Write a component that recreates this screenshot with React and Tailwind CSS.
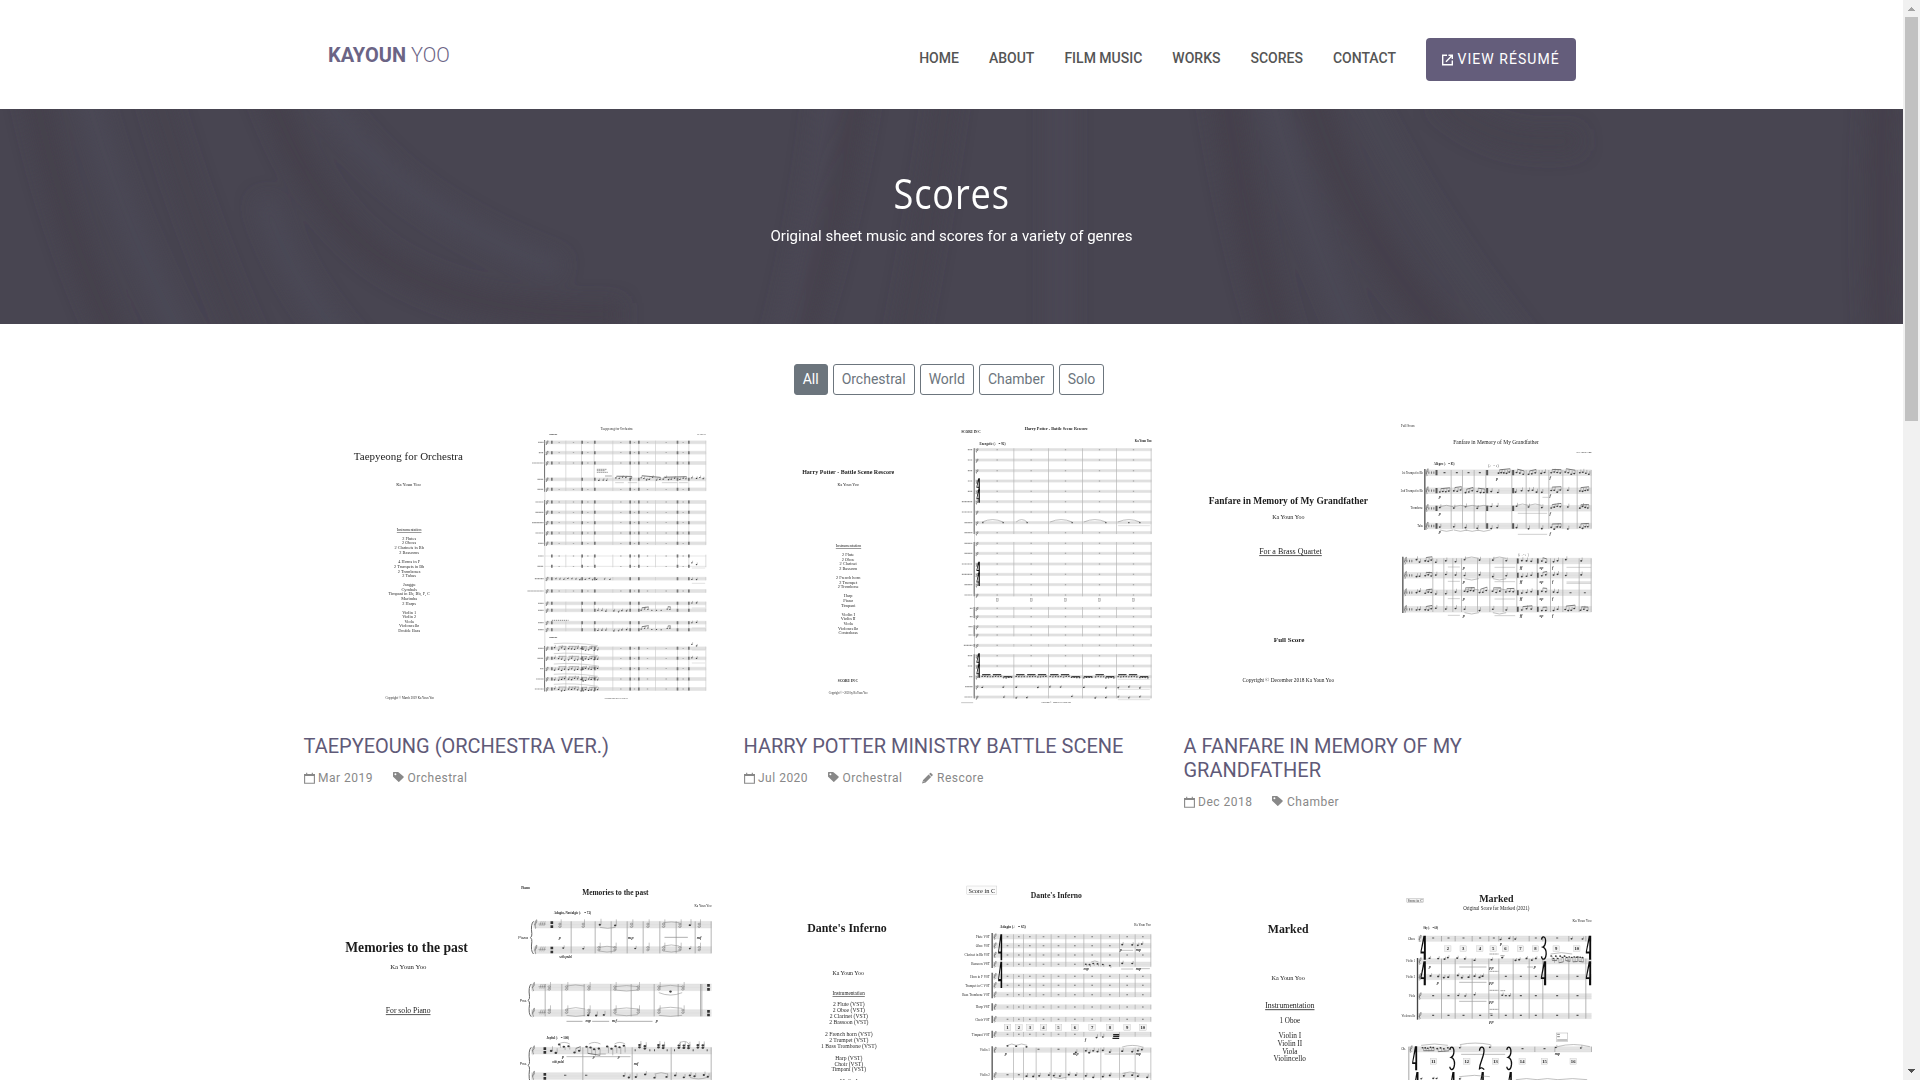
import React from "react";

const hash = (n) => {
  const v = Math.sin(n * 12.9898) * 43758.5453;
  return v - Math.floor(v);
};

/* ---------- engraving primitives ---------- */

const SERIF = "'Liberation Serif', 'DejaVu Sans', serif";

function T({ x1, x2, y, s, b, u, i, f, children }) {
  return (
    <text
      x={x1}
      y={y}
      fontSize={s}
      fontWeight={b ? 700 : 400}
      fontStyle={i ? "italic" : "normal"}
      textDecoration={u ? "underline" : undefined}
      textLength={x2 - x1}
      lengthAdjust="spacingAndGlyphs"
      fontFamily={f || SERIF}
      fill="#1c1c1c"
    >
      {children}
    </text>
  );
}

function Lines({ cx, s, items }) {
  return items.map(([y, label]) => (
    <text key={y} x={cx} y={y} fontSize={s} textAnchor="middle" fontFamily={SERIF} fill="#2c2c2c">
      {label}
    </text>
  ));
}

function Staff({ x1, x2, ys, h = 10, clef = true }) {
  return ys.map((y) => (
    <g key={y}>
      <rect x={x1} y={y - h / 2} width={x2 - x1} height={h} fill="#e4e4e4" />
      <path d={`M${x1} ${y - h / 2}H${x2}M${x1} ${y}H${x2}M${x1} ${y + h / 2}H${x2}`} stroke="#d6d6d6" strokeWidth="1" />
      {clef && (
        <path
          d={`M${x1 + 5} ${y + h / 2 + 2}c5-3-4-6 1-${h}s4-3 3 2-8 4-4 8`}
          fill="none"
          stroke="#666"
          strokeWidth="2"
        />
      )}
    </g>
  ));
}

function Bars({ xs, y1, y2, c = "#9a9a9a", w = 2 }) {
  return <path d={xs.map((x) => `M${x} ${y1}V${y2}`).join("")} stroke={c} strokeWidth={w} fill="none" />;
}

function Marks({ xs, ys, w = 5, h = 10, c = "#555" }) {
  return (
    <path
      d={ys.map((y) => xs.map((x) => `M${x - w / 2} ${y - h / 2}h${w}v${h}h${-w}z`).join("")).join("")}
      fill={c}
    />
  );
}

function Labels({ x2, ys, w = 20 }) {
  return ys.map((y, k) => {
    const len = Array.isArray(w) ? w[k] : w;
    return <path key={y} d={`M${x2 - len} ${y}H${x2}`} stroke="#999" strokeWidth="3.5" strokeDasharray="4 1 3 1" />;
  });
}

function Notes({ xs, y, spread = 6, stem = 14, beam, seed = 1, r = 3 }) {
  const pts = xs.map((x, k) => [x, y + (hash(seed + k) - 0.5) * 2 * spread]);
  return (
    <g stroke="#666" fill="#3a3a3a">
      {pts.map(([x, py], k) => (
        <g key={k}>
          <ellipse cx={x} cy={py} rx={r} ry={r * 0.8} stroke="none" />
          {stem !== 0 && <path d={`M${x + r} ${py}V${py - stem}`} strokeWidth="1.2" />}
        </g>
      ))}
      {beam && pts.length > 1 && (
        <path d={`M${pts[0][0] + r} ${pts[0][1] - stem}L${pts[pts.length - 1][0] + r} ${pts[pts.length - 1][1] - stem}`} strokeWidth="2.6" />
      )}
    </g>
  );
}

function Slur({ x1, x2, y, d = -10 }) {
  return <path d={`M${x1} ${y}Q${(x1 + x2) / 2} ${y + d * 1.6} ${x2} ${y}`} stroke="#888" strokeWidth="1.6" fill="none" />;
}

function Dyn({ items }) {
  return items.map(([x, y, t]) => (
    <text key={`${x}-${y}`} x={x} y={y} fontSize="13" fontStyle="italic" fontWeight="700" textAnchor="middle" fontFamily={SERIF} fill="#333">
      {t}
    </text>
  ));
}

function Boxed({ items, y, size = 17 }) {
  return items.map(([x, n]) => (
    <g key={x}>
      <rect x={x - size / 2 - 1} y={y - size / 2} width={size + 2} height={size} fill="#f1f1f1" stroke="#bbb" />
      <text x={x} y={y + 5} fontSize="14" fontWeight="700" textAnchor="middle" fontFamily={SERIF} fill="#222">
        {n}
      </text>
    </g>
  ));
}

function BigFour({ x, y, h, w = 16 }) {
  return (
    <path
      fill="#111"
      d={`M${x + w * 0.55} ${y}L${x + w} ${y}V${y + h}H${x + w * 0.6}V${y + h * 0.74}H${x}V${y + h * 0.66}ZM${x + w * 0.65} ${y + h * 0.2}L${x + w * 0.2} ${y + h * 0.66}H${x + w * 0.65}Z`}
      fillRule="evenodd"
    />
  );
}

function BigThree({ x, y, h = 70 }) {
  return (
    <path
      d={`M${x} ${y + h * 0.14}C${x + 2} ${y - 4} ${x + 14} ${y} ${x + 12} ${y + h * 0.26}Q${x + 11} ${y + h * 0.42} ${x + 4} ${y + h * 0.46}Q${x + 15} ${y + h * 0.52} ${x + 14} ${y + h * 0.76}C${x + 12} ${y + h * 1.05} ${x + 1} ${y + h * 1.02} ${x} ${y + h * 0.86}`}
      fill="none"
      stroke="#111"
      strokeWidth="4"
    />
  );
}

/* ---------- thumbnails ---------- */

function Sheet({ height, className, title, children }) {
  return (
    <svg role="img" aria-label={title} viewBox={`40.5 30 1248 ${height}`} className={className}>
      <defs>
        <filter id="soft" x="-5%" y="-5%" width="110%" height="110%">
          <feGaussianBlur stdDeviation="1.3" />
        </filter>
      </defs>
      <g filter="url(#soft)">{children}</g>
    </svg>
  );
}

function Taepyeong() {
  const a = [97, 128, 159, 208, 238];
  const b = [276, 307, 338, 369, 400];
  const k = [580, 601];
  const l = [638, 659];
  const s = [715, 745, 776, 807, 837];
  const full = [...a, ...b, 506, 543, ...k, ...l, ...s];
  const bars = [826, 873, 911, 967, 1019, 1045, 1095, 1161, 1195, 1246];
  const sig = [784, 875, 913, 1019, 1045, 1161, 1195];
  return (
    <>
      <T x1={190} x2={517} y={149} s={32}>Taepyeong for Orchestra</T>
      <T x1={317} x2={391} y={229} s={14}>Ka Youn Yoo</T>
      <T x1={319} x2={393} y={363} s={13} u>Instrumentation</T>
      <Lines cx={356} s={13} items={[[389, "2 Flutes"], [402, "2 Oboes"], [416, "2 Clarinets in Bb"], [432, "2 Bassoons"], [458, "4 Horns in F"], [473, "2 Trumpets in Bb"], [488, "2 Trombones"], [502, "2 Tubas"], [528, "Janggu"], [542, "Cymbals"], [556, "Timpani in Eb, Bb, F, C"], [571, "Marimba"], [585, "2 Harps"], [611, "Violin 1"], [625, "Violin 2"], [638, "Viola"], [651, "Violoncello"], [665, "Double Bass"]]} />
      <T x1={285} x2={431} y={867} s={11}>Copyright © March 2019 Ka Youn Yoo</T>
      <T x1={931} x2={1026} y={61} s={12}>Taepyeong for Orchestra</T>
      <T x1={1220} x2={1246} y={75} s={6}>Ka Youn Yoo</T>
      <T x1={776} x2={800} y={74} s={8} b>Moderato</T>
      <T x1={776} x2={800} y={685} s={8} b>Moderato</T>
      <path d="M763 90V846" stroke="#bbb" strokeWidth="1.5" />
      <Bars xs={[762]} y1={90} y2={245} w={3} c="#777" />
      <Bars xs={[762]} y1={270} y2={407} w={3} c="#777" />
      <Bars xs={[762]} y1={708} y2={844} w={3} c="#777" />
      <Staff x1={763} x2={1247} ys={full} h={9} />
      <path d="M763 438H1247M763 469H1247" stroke="#ccc" strokeWidth="1.5" />
      {[[92, 243], [271, 405], [434, 472], [501, 511], [538, 548], [575, 606], [633, 664], [710, 842]].map(([p, q]) => (
        <Bars key={p} xs={bars} y1={p} y2={q} c="#c8c8c8" w={1.8} />
      ))}
      <Marks xs={sig} ys={[...full, 438, 469]} w={5} h={9} c="#777" />
      <Marks xs={[806, 849, 892, 991, 1032, 1071, 1127, 1178]} ys={[97, 128, 159, 238, ...b, 438, 469, 543]} w={4} h={2.5} c="#999" />
      <Marks xs={[991, 1032, 1071, 1127, 1178]} ys={s} w={4} h={2.5} c="#999" />
      <Labels x2={759} ys={[...full, 438, 469]} w={[16, 14, 34, 18, 18, 24, 24, 34, 24, 16, 26, 48, 16, 16, 16, 16, 16, 18, 10, 22, 26, 16, 18]} />
      <path d="M919 178H948M919 182H944M919 187H952M944 198H964" stroke="#888" strokeWidth="2.5" strokeDasharray="5 1" />
      <Notes xs={[925, 938, 948]} y={211} r={2.2} stem={6} spread={3} seed={3} />
      <Notes xs={[976, 986, 996, 1006, 1022]} y={204} r={2.2} stem={5} beam seed={5} spread={4} />
      <Notes xs={[1052, 1060, 1068, 1076, 1086, 1098, 1108]} y={205} r={2.2} stem={6} beam seed={8} spread={5} />
      <Notes xs={[1118, 1126, 1134, 1142, 1152, 1168, 1178, 1186]} y={205} r={2.2} stem={6} beam seed={11} spread={4} />
      <Notes xs={[1204, 1218, 1228, 1238]} y={204} r={2.2} stem={6} seed={17} spread={4} />
      <path d="M974 218H1000M1012 218H1040M1114 218H1160M1165 218H1192" stroke="#999" strokeWidth="1.3" />
      <Notes xs={[796, 808, 820, 832, 844, 856, 868, 884, 896, 906, 918, 942, 958]} y={507} r={2} stem={4} spread={2} seed={4} />
      {[601, 659].map((y) => (
        <g key={y}>
          <Notes xs={[922, 934, 946]} y={y} r={2.2} stem={7} spread={3} seed={y} />
          <Notes xs={[970, 984, 994, 1008]} y={y + 2} r={2.2} stem={6} spread={3} seed={y + 1} />
          <Notes xs={[1052, 1062, 1072]} y={y - 3} r={2.2} stem={7} beam spread={3} seed={y + 2} />
          <Notes xs={[1084, 1098, 1112]} y={y} r={2} stem={0} spread={1} seed={y + 3} />
          <Notes xs={[1130, 1138]} y={y - 3} r={2.2} stem={7} beam spread={2} seed={y + 3} />
        </g>
      ))}
      {[460, 506, 580, 640, 706, 745].map((y) => (
        <g key={y}>
          <Notes xs={[1204, 1218]} y={y} r={2.2} stem={6} spread={4} seed={y} />
          <path d={`M1204 ${y + 14}H1244`} stroke="#bbb" strokeWidth="1.3" />
        </g>
      ))}
      <path d="M784 631H834" stroke="#888" strokeWidth="3" strokeDasharray="4 2" />
      {s.map((y, n) => (
        <g key={y}>
          <Notes xs={[792, 804, 813, 822, 834, 843, 852, 861, 872, 878, 885, 894, 902, 911, 921]} y={y + 2} r={2.3} stem={8} spread={4} seed={n * 7} />
          <path d={`M804 ${y - 6}H828M834 ${y - 6}H866M872 ${y - 5}H890M896 ${y - 5}H920`} stroke="#777" strokeWidth="1.6" />
          <path d={`M790 ${y - 14}Q850 ${y - 19} 922 ${y - 8}`} stroke="#aaa" strokeWidth="1.5" fill="none" />
        </g>
      ))}
      <T x1={943} x2={1012} y={867} s={6}>Copyright March 2019 Ka Youn Yoo</T>
    </>
  );
}

function HarryPotter() {
  const g1 = [119, 150, 182, 213, 244, 275, 306, 338, 368];
  const g2 = [400, 430, 462, 493, 524, 555];
  const g5 = [737, 768, 800, 830, 861];
  const all = [...g1, ...g2, 595, 620, 650, 675, 706, ...g5];
  const bars = [850, 954, 1056, 1158, 1262];
  const mids = [800, 902, 1005, 1107, 1209];
  return (
    <>
      <T x1={215} x2={491} y={191} s={19} b>Harry Potter - Battle Scene Rescore</T>
      <T x1={321} x2={385} y={228} s={13}>Ka Youn Yoo</T>
      <T x1={316} x2={392} y={411} s={13} u>Instrumentation</T>
      <Lines cx={353} s={13} items={[[438, "2 Flute"], [452, "2 Oboe"], [466, "2 Clarinet"], [480, "2 Bassoon"], [507, "2 French horn"], [521, "2 Trumpet"], [535, "2 Trombone"], [562, "Harp"], [576, "Piano"], [590, "Timpani"], [617, "Violin I"], [631, "Violin II"], [645, "Viola"], [659, "Violoncello"], [672, "Contrabass"]]} />
      <T x1={322} x2={383} y={817} s={11} b>SCORE IN C</T>
      <T x1={295} x2={411} y={851} s={9.5}>Copyright © - 2020 by Ka Youn Yoo</T>
      <T x1={883} x2={1072} y={59} s={13} b>Harry Potter - Battle Scene Rescore</T>
      <T x1={692} x2={751} y={70} s={11} b>SCORE IN C</T>
      <T x1={1213} x2={1263} y={96} s={9} b>Ka Youn Yoo</T>
      <T x1={747} x2={825} y={106} s={12} b>Energetic (♩ = 92)</T>
      <path d="M732 114V866" stroke="#aaa" strokeWidth="1.5" />
      <Staff x1={733} x2={1263} ys={all} h={7} />
      {[[115, 372], [396, 559], [591, 624], [646, 679], [702, 710], [733, 865]].map(([p, q]) => (
        <g key={p}>
          <Bars xs={bars} y1={p} y2={q} c="#b4b4b4" />
          <Bars xs={[731]} y1={p} y2={q} c="#777" w={3.5} />
        </g>
      ))}
      <Labels x2={726} ys={all} w={[14, 14, 14, 14, 14, 32, 32, 24, 24, 24, 24, 32, 32, 24, 24, 8, 8, 12, 12, 26, 14, 14, 10, 22, 24]} />
      <Marks xs={mids} ys={[119, 150, 182, 213, 244, 275, 306, 368, ...g2, 595, 620, 650, 675, 706, 737, 768]} w={4} h={3} c="#999" />
      {[205, 455, 730].map((y) => (
        <g key={y}>
          <BigFour x={738} y={y} h={38} w={10} />
          <BigFour x={738} y={y + 33} h={40} w={10} />
        </g>
      ))}
      {[[755, 818], [857, 890], [959, 1025], [1060, 1126], [1162, 1228]].map(([p, q]) => (
        <Slur key={p} x1={p} x2={q} y={336} d={-9} />
      ))}
      <Marks xs={[757, 818, 890, 1025, 1126, 1195, 1228]} ys={[338]} w={4} h={4} />
      {mids.map((x) => (
        <rect key={x} x={x - 3} y={565} width="6" height="10" fill="#ddd" stroke="#888" />
      ))}
      {[[755, 0], [787, 0], [819, 6], [857, 0], [890, 0], [922, 0], [959, 0], [991, 0], [1023, 6], [1060, 6], [1095, 0], [1126, 6], [1163, 0], [1195, 0], [1228, 6]].map(([x, dy]) => (
        <g key={x}>
          <path d={`M${x} ${794 + dy}h25`} stroke="#333" strokeWidth="3.6" />
          <Notes xs={[x, x + 8, x + 16, x + 24]} y={800 + dy / 2} r={2.3} stem={4} spread={1} seed={x} />
        </g>
      ))}
      <Notes xs={[755, 818, 857, 922, 958, 990, 1060, 1126, 1163, 1195, 1228]} y={832} r={2.5} stem={5} spread={2} seed={3} />
      <Notes xs={[820, 857, 889, 1024, 1094, 1126, 1163, 1195, 1228]} y={861} r={2.5} stem={5} spread={3} seed={9} />
      <path d="M1162 808H1258M1162 838H1258M1162 869H1258M1162 347H1258" stroke="#bbb" strokeWidth="1.3" />
      <T x1={933} x2={1021} y={879} s={8}>Copyright © - 2020 by Ka Youn Yoo</T>
      <path d="M692 878H728" stroke="#aaa" strokeWidth="2" />
    </>
  );
}

function Fanfare() {
  const a = [188, 242, 295, 348];
  const b = [453, 496, 548, 598];
  const seg = (list, y, seed) =>
    list.map(([p, n, step, beam], k) => (
      <Notes key={p} xs={Array.from({ length: n }, (_, q) => p + q * step)} y={y} r={3} stem={10} spread={4} beam={beam} seed={seed + k * 5} />
    ));
  return (
    <>
      <T x1={115} x2={592} y={282} s={28} b>Fanfare in Memory of My Grandfather</T>
      <T x1={305} x2={402} y={326} s={18}>Ka Youn Yoo</T>
      <T x1={266} x2={454} y={433} s={22} u>For a Brass Quartet</T>
      <T x1={310} x2={402} y={696} s={21} b>Full Score</T>
      <T x1={216} x2={491} y={817} s={16}>Copyright © December 2018 Ka Youn Yoo</T>
      <T x1={691} x2={734} y={52} s={11}>Full Score</T>
      <T x1={848} x2={1105} y={101} s={16}>Fanfare in Memory of My Grandfather</T>
      <T x1={1218} x2={1263} y={130} s={8}>Ka Youn Yoo</T>
      <T x1={790} x2={852} y={165} s={11} b>Allegro (♩ = 85)</T>
      <T x1={953} x2={984} y={171} s={11}>(♩ = ♪)</T>
      <T x1={694} x2={757} y={192} s={9}>1st Trumpet in Bb</T>
      <T x1={691} x2={757} y={245} s={9}>2nd Trumpet in Bb</T>
      <T x1={720} x2={757} y={298} s={9}>Trombone</T>
      <T x1={740} x2={757} y={351} s={9}>Tuba</T>
      <Staff x1={763} x2={1263} ys={a} h={17} />
      <Staff x1={698} x2={1263} ys={b} h={17} />
      <Bars xs={[842, 876, 911, 946, 1024, 1067, 1106, 1135, 1177, 1220, 1262]} y1={180} y2={356} c="#aaa" w={2.2} />
      <Bars xs={[787, 820, 847, 873, 921, 958, 998, 1039, 1100, 1140, 1177, 1226, 1262]} y1={445} y2={606} c="#aaa" w={2.2} />
      <Bars xs={[763]} y1={177} y2={360} w={4} c="#555" />
      <Bars xs={[697]} y1={440} y2={609} w={4} c="#555" />
      <Marks xs={[798, 950, 1028]} ys={a} w={6} h={16} c="#555" />
      <Marks xs={[1042, 1102]} ys={b} w={5} h={15} c="#555" />
      <Marks xs={[775, 783, 790]} ys={a} w={3} h={7} c="#777" />
      <Marks xs={[709, 717, 724]} ys={b} w={3} h={7} c="#777" />
      <Marks xs={[822, 859, 894, 928]} ys={[188]} w={6} h={4} />
      {seg([[984, 5, 8, true], [1038, 3, 10, true], [1074, 3, 10, true], [1112, 2, 10, false], [1142, 4, 9, true], [1184, 4, 9, true], [1228, 4, 9, false]], 189, 3)}
      {seg([[808, 4, 9, true], [850, 3, 10, true], [885, 3, 10, true], [920, 3, 10, true], [962, 2, 20, false], [1035, 2, 18, false], [1074, 3, 12, false], [1114, 1, 9, false], [1142, 4, 9, true], [1192, 1, 9, false], [1228, 4, 8, true]], 244, 20)}
      {seg([[808, 1, 1], [850, 1, 1], [885, 1, 1], [920, 1, 1], [962, 2, 18, false], [1038, 1, 1], [1074, 1, 1], [1114, 1, 1], [1142, 4, 9, true], [1192, 1, 1], [1228, 4, 8, true]], 292, 40)}
      {seg([[808, 1, 1], [850, 1, 1], [885, 1, 1], [920, 1, 1], [962, 2, 18, false], [1038, 1, 1], [1074, 1, 1], [1114, 1, 1], [1142, 4, 9, true], [1192, 1, 1], [1228, 4, 8, true]], 354, 60)}
      {[808, 850, 885, 920].map((x) => (
        <g key={x}>
          <Slur x1={x} x2={x + 40} y={290} d={-5} />
          <Slur x1={x} x2={x + 40} y={360} d={5} />
        </g>
      ))}
      <Slur x1={1038} x2={1074} y={286} d={-5} />
      <Slur x1={1074} x2={1114} y={286} d={-5} />
      {b.map((y, n) => (
        <g key={y}>
          {seg([[738, 2, 9, false], [764, 3, 9, true], [796, 1, 1], [826, 1, 1], [855, 1, 1]], y, n * 13)}
          {n === 2
            ? seg([[882, 4, 9, true], [927, 3, 10, true], [966, 3, 11, true], [1006, 3, 11, true]], y - 4, 5)
            : seg([[882, 1, 1], [927, 1, 1], [967, 1, 1], [1007, 1, 1]], y, n + 2)}
          {seg([[1054, 3, 14, n === 3], [1114, 2, 12, true], [1149, 2, 12, false]], y, n * 9 + 4)}
          {n === 2 ? <Marks xs={[1200, 1243]} ys={[y]} w={6} h={3} /> : seg(n === 3 ? [[1184, 4, 9, true], [1230, 3, 10, true]] : [[1186, 1, 1], [1232, 1, 1]], y, n * 3)}
          <Slur x1={882} x2={925} y={y - (n === 1 || n === 3 ? -10 : 8)} d={n === 1 || n === 3 ? 5 : -5} />
          <Slur x1={967} x2={1007} y={y - (n === 1 || n === 3 ? -10 : 8)} d={n === 1 || n === 3 ? 5 : -5} />
          <path d={`M832 ${y + 18}H868M972 ${y + 19}H1034`} stroke="#999" strokeWidth="1.4" />
          <Dyn items={[[880, y + 23, "p"], [1052, y + 23, "ff"], [1113, y + 23, "sp"], [1147, y + 23, "f"]]} />
        </g>
      ))}
      <path d="M1188 472H1262M1188 516H1262M1188 520H1262M1042 310H1130M1042 373H1130M1116 262H1134" stroke="#999" strokeWidth="1.4" />
      <Dyn items={[[980, 210, "p"], [1139, 208, "f"], [808, 264, "p"], [1139, 262, "f"], [808, 314, "p"], [1139, 314, "f"], [808, 370, "p"], [1139, 374, "f"]]} />
      <T x1={1044} x2={1074} y={439} s={11}>(♩. = ♩)</T>
    </>
  );
}

function Brace({ x, y1, y2 }) {
  const m = (y1 + y2) / 2;
  return <path d={`M${x + 9} ${y1}Q${x} ${y1 + 8} ${x + 4} ${m - 12}Q${x + 5} ${m - 4} ${x} ${m}Q${x + 5} ${m + 4} ${x + 4} ${m + 12}Q${x} ${y2 - 8} ${x + 9} ${y2}`} fill="none" stroke="#666" strokeWidth="3" />;
}

function Chord({ x, y, up = true }) {
  return (
    <g>
      <ellipse cx={x} cy={y} rx="3.6" ry="2.4" fill="none" stroke="#666" strokeWidth="1.5" />
      <ellipse cx={x} cy={y + 8} rx="3.6" ry="2.4" fill="none" stroke="#666" strokeWidth="1.5" />
      <path d={up ? `M${x + 4} ${y + 8}V${y - 14}` : `M${x - 4} ${y}V${y + 22}`} stroke="#777" strokeWidth="1.3" />
    </g>
  );
}

function Memories() {
  return (
    <>
      <T x1={164} x2={532} y={245} s={41} b>Memories to the past</T>
      <T x1={299} x2={408} y={298} s={21}>Ka Youn Yoo</T>
      <T x1={286} x2={420} y={430} s={22} u>For solo Piano</T>
      <T x1={692} x2={718} y={57} s={9} b>Piano</T>
      <T x1={875} x2={1074} y={76} s={22} b>Memories to the past</T>
      <T x1={1212} x2={1263} y={112} s={10}>Ka Youn Yoo</T>
      <T x1={790} x2={902} y={131} s={11} b>Adagio, Nostalgic (♩ = 72)</T>
      <T x1={683} x2={713} y={207} s={12} f="'Liberation Sans', sans-serif">Piano</T>
      <T x1={688} x2={710} y={395} s={12} f="'Liberation Sans', sans-serif">Pno.</T>
      <T x1={688} x2={710} y={584} s={12} f="'Liberation Sans', sans-serif">Pno.</T>
      <Staff x1={729} x2={1263} ys={[164, 240]} h={20} />
      <Staff x1={722} x2={1263} ys={[352, 429, 542, 618]} h={20} />
      <Brace x={720} y1={154} y2={252} />
      <Brace x={713} y1={342} y2={440} />
      <Brace x={713} y1={532} y2={640} />
      <Bars xs={[842, 914, 962, 1010, 1058, 1108, 1157, 1214, 1262]} y1={154} y2={250} c="#999" w={2.2} />
      <Bars xs={[764, 814, 881, 961, 1022, 1091, 1163, 1230, 1234]} y1={342} y2={439} c="#999" w={2.2} />
      <Bars xs={[877, 1025, 1142, 1262]} y1={532} y2={640} c="#999" w={2.2} />
      <Marks xs={[784]} ys={[158, 170, 234, 246]} w={8} h={8} c="#333" />
      <Marks xs={[1254]} ys={[346, 358, 424, 435]} w={8} h={8} c="#333" />
      <Marks xs={[763]} ys={[536, 547, 613, 625]} w={8} h={8} c="#333" />
      {[164, 240, 352, 429].map((y) => (
        <path key={y} d={`M748 ${y + 4}l4-14M754 ${y + 4}l4-14M760 ${y + 4}l4-14M744 ${y - 2}h22`} stroke="#777" strokeWidth="1.5" />
      ))}
      {[808, 878, 1023, 1072, 1119, 1168, 1226].map((x) => (
        <Chord key={x} x={x} y={162} />
      ))}
      {[925, 973, 1072, 1119, 1168, 1226].map((x) => (
        <Chord key={x} x={x} y={232} />
      ))}
      <Notes xs={[928, 974, 1198]} y={166} spread={2} r={3.5} stem={18} seed={2} />
      <Notes xs={[818, 878, 1034, 1198]} y={236} spread={2} r={3} stem={8} seed={2} />
      <Slur x1={928} x2={975} y={172} d={4} />
      <Slur x1={1119} x2={1166} y={158} d={-3} />
      <Slur x1={925} x2={974} y={232} d={-4} />
      <Slur x1={925} x2={974} y={243} d={4} />
      <Slur x1={1119} x2={1166} y={228} d={-4} />
      <Slur x1={1119} x2={1166} y={243} d={4} />
      <path d="M1122 202H1192" stroke="#888" strokeWidth="2" />
      <Dyn items={[[808, 207, "p"], [1021, 207, "mp"], [1226, 206, "mf"], [893, 456, "mp"], [972, 456, "mf"], [1099, 456, "p"], [818, 564, "p"], [910, 564, "p"], [985, 564, "p"], [1037, 586, "mf"]]} />
      <T x1={807} x2={844} y={263} s={9} i b>with pedal</T>
      <T x1={785} x2={820} y={579} s={9} i b>with pedal</T>
      {[776, 828, 895, 973, 1043, 1105, 1177].map((x) => (
        <g key={x}>
          <Chord x={x} y={350} />
          <Chord x={x} y={420} />
        </g>
      ))}
      <Slur x1={828} x2={882} y={348} d={-4} />
      <Slur x1={973} x2={1043} y={350} d={-4} />
      <Slur x1={973} x2={1043} y={360} d={4} />
      <Slur x1={1105} x2={1175} y={350} d={-5} />
      <Slur x1={1105} x2={1175} y={368} d={9} />
      <Slur x1={828} x2={884} y={417} d={-5} />
      <Slur x1={828} x2={884} y={436} d={4} />
      <Slur x1={973} x2={1043} y={417} d={-4} />
      <Slur x1={973} x2={1043} y={434} d={4} />
      <Slur x1={1105} x2={1175} y={415} d={-4} />
      <Slur x1={1105} x2={1175} y={436} d={4} />
      <Notes xs={[893, 917, 940]} y={436} r={3.5} stem={12} spread={2} seed={5} />
      <Notes xs={[1140]} y={364} r={4} stem={0} spread={1} />
      <path d="M828 454H876M905 454H956M980 454H1086" stroke="#999" strokeWidth="2.4" />
      <T x1={768} x2={836} y={507} s={12} b>Joyful (♩ = 100)</T>
      <Notes xs={[782, 796]} y={548} r={4} stem={14} seed={2} />
      <Notes xs={[806, 820, 834]} y={526} r={3.8} stem={-10} seed={12} spread={4} />
      <Notes xs={[852, 866]} y={546} r={3.8} stem={12} beam seed={6} />
      <Notes xs={[888, 900, 911, 925]} y={532} r={3.8} stem={-20} beam seed={8} spread={6} />
      <Notes xs={[950, 963, 975, 987, 1000]} y={530} r={3.8} stem={-20} seed={15} spread={7} />
      <Slur x1={804} x2={838} y={522} d={-6} />
      <Slur x1={895} x2={930} y={522} d={-6} />
      <Slur x1={972} x2={1004} y={522} d={-6} />
      <path d="M828 560H1020M924 552H946" stroke="#999" strokeWidth="2" />
      {[1047, 1063, 1104, 1118, 1165, 1180, 1194, 1222, 1237].map((x, n) => (
        <g key={x}>
          <Notes xs={[x]} y={527} r={4.2} stem={12} spread={2} seed={n} />
          <Notes xs={[x]} y={534} r={4.2} stem={12} spread={2} seed={n} />
        </g>
      ))}
      <Slur x1={1165} x2={1196} y={522} d={-10} />
      <Marks xs={[1034, 1078, 1092, 1130, 1152, 1208, 1250]} ys={[541]} w={3} h={6} />
      <Marks xs={[824, 887]} ys={[616]} w={7} h={3} />
      <Notes xs={[1000, 1015, 1036, 1064, 1092, 1128, 1154, 1180, 1198, 1212, 1240, 1252]} y={617} r={3.5} stem={10} seed={9} />
      <Slur x1={1092} x2={1132} y={612} d={-5} />
      <Slur x1={1198} x2={1250} y={622} d={6} />
    </>
  );
}

function Dante() {
  const a = [200, 227, 255, 283];
  const b = [319, 346, 374];
  const all = [...a, ...b, 411, 448, 493, 540, 616];
  const bars = [849, 879, 917, 962, 1006, 1060, 1111, 1167, 1214, 1261];
  const mids = [831, 865, 898, 939, 984, 1033, 1085, 1138, 1190, 1237];
  return (
    <>
      <T x1={230} x2={469} y={185} s={36} b>Dante's Inferno</T>
      <T x1={306} x2={400} y={314} s={18}>Ka Youn Yoo</T>
      <T x1={306} x2={403} y={375} s={16} u>Instrumentation</T>
      <Lines cx={355} s={17} items={[[409, "2 Flute (VST)"], [427, "2 Oboe (VST)"], [445, "2 Clarinet (VST)"], [463, "2 Bassoon (VST)"], [498, "2 French horn (VST)"], [516, "2 Trumpet (VST)"], [534, "1 Bass Trombone (VST)"], [569, "Harp (VST)"], [587, "Choir (VST)"], [604, "Timpani (VST)"], [639, "Violin I"]]} />
      <rect x="709" y="48" width="90" height="26" fill="#fbfbfb" stroke="#bbb" />
      <T x1={714} x2={794} y={68} s={20}>Score in C</T>
      <T x1={901} x2={1054} y={83} s={23} b>Dante's Inferno</T>
      <T x1={1211} x2={1261} y={168} s={9}>Ka Youn Yoo</T>
      <T x1={808} x2={886} y={173} s={13} b>Adagio (♩ = 65)</T>
      {[["Flute VST", 736, 203], ["Oboe VST", 736, 230], ["Clarinet in Bb VST", 702, 258], ["Bassoon VST", 722, 286], ["Horn in F VST", 719, 323], ["Trumpet in C VST", 704, 350], ["Bass Trombone VST", 695, 378], ["Harp VST", 736, 415], ["Choir VST", 734, 452], ["Timpani VST", 724, 497], ["Violin 1", 748, 543], ["Violin 2", 748, 619]].map(([t, x, y]) => (
        <T key={y} x1={x} x2={778} y={y} s={10}>{t}</T>
      ))}
      <Staff x1={787} x2={1262} ys={all} h={14} />
      {[[193, 290], [312, 381], [404, 418], [441, 455], [486, 500], [533, 640]].map(([p, q]) => (
        <g key={p}>
          <Bars xs={bars} y1={p} y2={q} c="#aaa" />
          <Bars xs={[785]} y1={p - 4} y2={q + 4} c="#555" w={4} />
        </g>
      ))}
      <Marks xs={mids} ys={[200, 255, 319, 346, 374, 411, 448]} w={5} h={3} c="#777" />
      <Marks xs={mids.slice(0, 8)} ys={[227]} w={5} h={3} c="#777" />
      <Marks xs={mids.slice(0, 6)} ys={[283, 493]} w={5} h={3} c="#777" />
      <BigFour x={803} y={193} h={78} w={12} />
      <BigFour x={803} y={275} h={79} w={12} />
      <Boxed y={473} size={18} items={mids.map((x, n) => [x, n + 1])} />
      <Notes xs={[1066, 1077, 1088, 1101, 1117, 1138]} y={283} r={3} stem={-7} seed={5} spread={4} />
      <Slur x1={1082} x2={1104} y={276} d={-4} />
      <Notes xs={[1175, 1205, 1222, 1234]} y={225} r={3} stem={8} seed={4} spread={4} />
      <Notes xs={[1175, 1205]} y={281} r={3} stem={8} seed={4} spread={3} />
      <path d="M1172 241H1208M1172 297H1208M1228 296H1258M1122 552H1214" stroke="#999" strokeWidth="1.8" />
      <Dyn items={[[1067, 299, "mp"], [1224, 244, "mp"], [1224, 299, "mp"], [1171, 244, "p"], [826, 556, "p"], [1036, 556, "mp"], [1224, 556, "mp"], [1065, 512, "f"]]} />
      <Notes xs={[1098, 1117]} y={502} r={3} stem={10} spread={1} />
      <path d="M1148 494H1166M1148 499H1166M1146 505H1166" stroke="#222" strokeWidth="3.4" />
      <Notes xs={[831, 857, 888]} y={530} r={3.2} stem={0} spread={4} seed={7} />
      <Slur x1={831} x2={857} y={526} d={-5} />
      <Slur x1={857} x2={890} y={526} d={-5} />
      <Marks xs={[924, 984]} ys={[538]} w={6} h={3} />
      <Notes xs={[1036, 1066, 1076, 1088, 1101, 1117, 1138, 1175, 1205, 1222, 1234]} y={543} r={3.2} stem={9} spread={6} seed={14} />
      <Slur x1={1175} x2={1236} y={531} d={-6} />
      <Marks xs={[831, 865]} ys={[614]} w={6} h={3} />
      <Notes xs={[888, 908, 926, 955, 970, 988, 1015, 1036, 1066, 1088, 1117, 1138, 1180, 1205, 1222, 1250]} y={618} r={3.2} stem={9} spread={4} seed={21} />
      <Slur x1={970} x2={1008} y={622} d={4} />
      <Slur x1={1176} x2={1222} y={610} d={-5} />
    </>
  );
}

function Marked() {
  const ys = [206, 274, 321, 379, 438];
  const bars = [813, 854, 905, 955, 985, 1028, 1076, 1117, 1195, 1246];
  return (
    <>
      <T x1={292} x2={414} y={189} s={37} b>Marked</T>
      <T x1={303} x2={403} y={330} s={19}>Ka Youn Yoo</T>
      <T x1={284} x2={432} y={415} s={24} u>Instrumentation</T>
      <T x1={327} x2={389} y={460} s={23}>1 Oboe</T>
      <T x1={324} x2={392} y={505} s={23}>Violin I</T>
      <T x1={321} x2={395} y={528} s={23}>Violin II</T>
      <T x1={335} x2={381} y={551} s={23}>Viola</T>
      <T x1={309} x2={406} y={574} s={23}>Violincello</T>
      <rect x="709" y="85" width="50" height="13" fill="#f2f2f2" stroke="#999" />
      <T x1={712} x2={756} y={95} s={10}>Score in C</T>
      <T x1={926} x2={1029} y={96} s={31} b>Marked</T>
      <T x1={878} x2={1077} y={120} s={16}>Original Score for Marked (2021)</T>
      <T x1={1206} x2={1263} y={156} s={11}>Ka Youn Yoo</T>
      <T x1={758} x2={803} y={177} s={10} b>Shy (♩ = 60)</T>
      {[["Oboe", 713, 209], ["Violin 1", 706, 277], ["Violin 2", 706, 324], ["Viola", 715, 382], ["Violoncello", 693, 441]].map(([t, x, y]) => (
        <T key={y} x1={x} x2={734} y={y} s={9.5}>{t}</T>
      ))}
      <Staff x1={742} x2={1263} ys={ys} h={16} />
      <Bars xs={bars} y1={198} y2={214} c="#999" w={2.2} />
      <Bars xs={bars} y1={266} y2={446} c="#999" w={2.2} />
      <Bars xs={[741]} y1={264} y2={449} c="#444" w={4} />
      <Marks xs={[788, 834, 879, 929, 970, 1096, 1160]} ys={[204]} w={6} h={3.5} />
      <Marks xs={[1006, 1051, 1096, 1160, 1221]} ys={[319, 377, 436]} w={6} h={3.5} />
      <Marks xs={[788, 834, 879, 929, 963]} ys={[436]} w={6} h={3.5} />
      <Marks xs={[788, 834]} ys={[377]} w={6} h={3.5} />
      <Notes xs={[990, 1016, 1034, 1203, 1236]} y={207} r={3} stem={7} spread={2} />
      <Boxed y={236} size={17} items={[[832, 2], [878, 3], [928, 4], [968, 5], [1005, 6], [1050, 7], [1095, 8], [1157, 9], [1219, 10]]} />
      <Notes xs={[777, 803, 822, 832, 860, 883, 912, 963, 995, 1035, 1046, 1068, 1084, 1096]} y={266} r={3.2} stem={7} spread={5} seed={4} />
      {[1142, 1162, 1182, 1204, 1222].map((x, n) => (
        <Notes key={x} xs={[x, x + 7, x + 14]} y={262} r={3} stem={-13} beam spread={4} seed={n} />
      ))}
      <Slur x1={1140} x2={1205} y={252} d={-5} />
      <Notes xs={[780, 803, 820, 833, 862, 874, 894, 912, 927, 936]} y={319} r={3.2} stem={8} spread={4} seed={8} />
      <Notes xs={[863, 884, 912, 995, 1017]} y={377} r={3} stem={8} spread={4} seed={5} />
      <path d="M866 291H948M866 337H948M866 394H948M1070 291H1088" stroke="#999" strokeWidth="2" />
      <Dyn items={[[778, 295, "p"], [802, 341, "p"], [963, 296, "pp"], [963, 342, "pp"], [963, 399, "pp"], [963, 459, "pp"], [1093, 295, "p"], [992, 225, "p"], [1161, 556, "mp"]]} />
      <path d="M957 252H984M957 304H984M957 361H984M957 418H984M990 257H1002M990 362H1004M957 431H966" stroke="#999" strokeWidth="3" strokeDasharray="4 1" />
      <BigFour x={750} y={197} h={72} w={16} />
      <BigFour x={750} y={274} h={72} w={16} />
      <BigThree x={1113} y={199} />
      <BigFour x={1111} y={274} h={72} w={16} />
      <BigFour x={1246} y={197} h={72} w={16} />
      <BigFour x={1246} y={274} h={72} w={16} />
      <Staff x1={715} x2={1263} ys={[538]} h={16} />
      <T x1={693} x2={706} y={540} s={9}>Ob.</T>
      <Bars xs={[715]} y1={530} y2={640} c="#777" />
      <Bars xs={[1093, 1153, 1263]} y1={530} y2={546} c="#999" />
      <Notes xs={[756, 764, 772, 780, 788]} y={534} r={3} stem={-9} beam spread={3} seed={4} />
      <Notes xs={[800, 810, 820, 832]} y={534} r={3} stem={-9} beam spread={3} seed={14} />
      <Slur x1={752} x2={832} y={526} d={-5} />
      <Slur x1={868} x2={960} y={524} d={-6} />
      <Slur x1={1160} x2={1258} y={530} d={-8} />
      <Notes xs={[868, 958, 1156, 1231]} y={533} r={3} stem={8} spread={4} seed={3} />
      <Marks xs={[1056, 1122]} ys={[536]} w={6} h={3.5} />
      <path d="M872 553H1004" stroke="#999" strokeWidth="2" />
      <BigFour x={725} y={529} h={72} w={15} />
      <BigThree x={838} y={530} />
      <path d="M927 542C928 526 943 528 940 548C937 568 927 580 927 596Q934 590 941 599" fill="none" stroke="#111" strokeWidth="4" />
      <BigThree x={1009} y={530} />
      <Boxed y={574} size={17} items={[[789, 11], [889, 12], [975, 13], [1055, 14], [1122, 15], [1208, 16]]} />
      <rect x="1158" y="489" width="34" height="25" fill="#fff" stroke="#888" />
      <path d="M1160 493H1168M1160 500H1168M1160 510H1190" stroke="#888" strokeWidth="3" />
      {[730, 838, 926, 1010].map((x) => (
        <BigFour key={x} x={x} y={606} h={72} w={14} />
      ))}
      <Slur x1={866} x2={958} y={620} d={-5} />
      <Slur x1={1036} x2={1100} y={629} d={-4} />
      <Slur x1={1100} x2={1162} y={629} d={-4} />
      <Slur x1={1162} x2={1250} y={629} d={-4} />
      <Notes xs={[752, 788, 798, 868]} y={626} r={3} stem={5} spread={3} seed={3} />
    </>
  );
}

/* ---------- page ---------- */

function CalendarIcon() {
  return (
    <svg viewBox="0 0 11 12" className="mr-[3.5px] h-3 w-[11px] shrink-0" fill="none" stroke="currentColor">
      <path d="M.6 2.5h9.8v8.7H.6z" strokeWidth="1.1" />
      <path d="M0 3h11" strokeWidth="2" />
      <path d="M2.7.8v2M8.3.8v2" strokeWidth="1.1" />
    </svg>
  );
}

function TagIcon() {
  return (
    <svg viewBox="0 0 11 12" className="mr-[3.5px] h-3 w-[11px] shrink-0 -translate-y-px" fill="currentColor">
      <path fillRule="evenodd" d="M0 1.6Q0 1 .6 1H5Q5.400 1 5.800 1.400L10.600 5.600Q11 6 10.600 6.400L6.200 10.700Q5.800 11.100 5.400 10.700L.4 6Q0 5.600 0 5.200ZM2.400 2.300A1 1 0 1 0 2.400 4.300A1 1 0 1 0 2.400 2.300Z" />
    </svg>
  );
}

function PencilIcon() {
  return (
    <svg viewBox="0 0 11 12" className="mr-[3.5px] h-3 w-[11px] shrink-0" fill="currentColor">
      <path d="M7.100 1.900L9.600 4.400L10.600 3.400Q11 2.900 10.600 2.500L9 .9Q8.500.5 8.100.9ZM6.600 2.400L1.100 7.900L0 11.500L3.600 10.400L9.100 4.900ZM1.900 8.900L2.600 9.600L1.600 10L1.500 9.800Z" />
    </svg>
  );
}

const META = { date: CalendarIcon, tag: TagIcon, edit: PencilIcon };

function Card({ title, art: Art, meta, height, svgClass }) {
  return (
    <article className="flex flex-col">
      <Sheet title={title} height={height} className={svgClass}>
        <Art />
      </Sheet>
      {meta && (
        <>
          <h3 className="mt-6 text-[20px] leading-6 text-[#5f5a78] uppercase">{title}</h3>
          <ul className="mt-[11px] flex gap-5 text-[12px] leading-[18px] tracking-[0.5px] text-[#888]">
            {meta.map(([kind, label]) => {
              const Icon = META[kind];
              return (
                <li key={label} className="flex items-center">
                  <Icon />
                  {label}
                </li>
              );
            })}
          </ul>
        </>
      )}
    </article>
  );
}

const ROW_ONE = [
  { title: "Taepyeoung (Orchestra Ver.)", art: Taepyeong, meta: [["date", "Mar 2019"], ["tag", "Orchestral"]] },
  { title: "Harry Potter Ministry Battle Scene", art: HarryPotter, meta: [["date", "Jul 2020"], ["tag", "Orchestral"], ["edit", "Rescore"]] },
  { title: "A Fanfare in Memory of My Grandfather", art: Fanfare, meta: [["date", "Dec 2018"], ["tag", "Chamber"]] },
];

const ROW_TWO = [
  { title: "Memories to the Past", art: Memories },
  { title: "Dante's Inferno", art: Dante },
  { title: "Marked", art: Marked },
];

function Curtain() {
  return (
    <svg viewBox="0 0 1903 215" preserveAspectRatio="none" className="absolute inset-0 h-full w-full" aria-hidden="true">
      <defs>
        <filter id="fold" x="-10%" y="-30%" width="120%" height="160%">
          <feGaussianBlur stdDeviation="10" />
        </filter>
      </defs>
      <rect width="1903" height="215" fill="#484551" />
      <g filter="url(#fold)" fill="none">
        <g stroke="#45404c" strokeWidth="22">
          <path d="M30 -40Q60 120 130 260" />
          <path d="M150 -40Q190 110 260 260" opacity="0.6" />
          <path d="M262 -40Q310 110 400 160T620 205" />
          <path d="M860 -40Q840 110 790 260" />
          <path d="M950 -40Q930 110 900 260" opacity="0.6" />
          <path d="M1222 -40Q1245 130 1290 260" strokeWidth="30" />
          <path d="M1305 -40Q1345 130 1480 260" strokeWidth="30" />
          <path d="M1440 -10Q1500 45 1580 30" opacity="0.6" />
          <path d="M1885 -40Q1875 110 1885 260" strokeWidth="30" />
        </g>
        <g stroke="#4b4957" strokeWidth="20">
          <path d="M80 -40Q120 120 200 260" />
          <path d="M310 -40Q370 90 560 160" />
          <path d="M265 90Q290 180 370 260" />
          <path d="M830 -40Q815 120 775 260" opacity="0.7" />
          <path d="M1060 -40V260" opacity="0.7" />
          <path d="M1265 -40Q1295 100 1370 260" />
          <path d="M1350 -40Q1410 100 1540 260" opacity="0.5" />
        </g>
      </g>
    </svg>
  );
}

export default function App() {
  return (
    <div className="flex h-[1080px] w-[1920px] overflow-hidden bg-white font-['Roboto',sans-serif]">
      <div className="flex w-[1903px] flex-col overflow-hidden">
        <header className="flex h-[109px] shrink-0 justify-between pr-[327px] pl-[328px]">
          <a className="mt-[41px] text-[20px] leading-7 font-light text-[#6b6485]">
            <b className="font-bold">KAYOUN</b> YOO
          </a>
          <nav className="mt-[38px] flex h-[43px] text-[14px] font-medium text-[#555]">
            <div className="mr-[30px] flex h-10 items-center gap-[30px]">
              {["HOME", "ABOUT", "FILM MUSIC", "WORKS", "SCORES", "CONTACT"].map((n) => (
                <a key={n}>{n}</a>
              ))}
            </div>
            <a className="flex h-[43px] w-[150px] items-center rounded bg-[#645d7b] pl-[15.5px] font-normal tracking-[1.05px] text-white">
              <svg viewBox="0 0 11 12" className="mr-[5px] h-3 w-[11px]" fill="none" stroke="currentColor" strokeWidth="1.4">
                <path d="M5 1.200H.7V10.800H10.300V6.500M6.500 1.200H10.300V5M10.300 1.200L4 7.800" />
              </svg>
              VIEW RÉSUMÉ
            </a>
          </nav>
        </header>

        <section className="relative h-[215px] shrink-0 text-center text-white">
          <Curtain />
          <div className="relative flex flex-col items-center pt-[57px]">
            <h1 className="scale-x-[0.86] font-['Open_Sans',sans-serif] text-[42px] leading-[54px] tracking-[1px]">Scores</h1>
            <p className="mt-[5px] text-[15px] leading-[23px]">Original sheet music and scores for a variety of genres</p>
          </div>
        </section>

        <div className="mt-10 flex h-[31px] shrink-0 justify-center gap-[5px] pr-[5px] text-[14px] leading-[21px] text-[#6c757d]">
          {["All", "Orchestral", "World", "Chamber", "Solo"].map((n, i) => (
            <button
              key={n}
              className={
                i === 0
                  ? "rounded-[3px] border border-[#6c757d] bg-[#6c757d] px-2 text-white"
                  : "rounded-[3px] border border-[#6c757d] px-2"
              }
            >
              {n}
            </button>
          ))}
        </div>

        <main className="mt-[25px] ml-[303.5px] w-[1296px]">
          <div className="grid h-[460px] grid-cols-3 gap-6">
            {ROW_ONE.map((c) => (
              <Card key={c.title} {...c} height={870} svgClass="h-[290px] w-[416px]" />
            ))}
          </div>
          <div className="grid grid-cols-3 gap-6">
            {ROW_TWO.map((c) => (
              <Card key={c.title} {...c} height={600} svgClass="h-[200px] w-[416px]" />
            ))}
          </div>
        </main>
      </div>

      <div className="flex w-[17px] flex-col items-center justify-between bg-[#f1f1f1]">
        <div className="flex flex-col items-center">
          <svg viewBox="0 0 17 17" className="size-[17px]" fill="#a3a3a3" shapeRendering="crispEdges">
            <path d="M8 7h1v1h1v1h1v1h1v1H5v-1h1v-1h1V8h1z" />
          </svg>
          <div className="h-[404px] w-[13px] bg-[#c1c1c1]" />
        </div>
        <svg viewBox="0 0 17 17" className="size-[17px]" fill="#505050" shapeRendering="crispEdges">
          <path d="M5 6h7v1h-1v1h-1v1H9v1H8V9H7V8H6V7H5z" />
        </svg>
      </div>
    </div>
  );
}
